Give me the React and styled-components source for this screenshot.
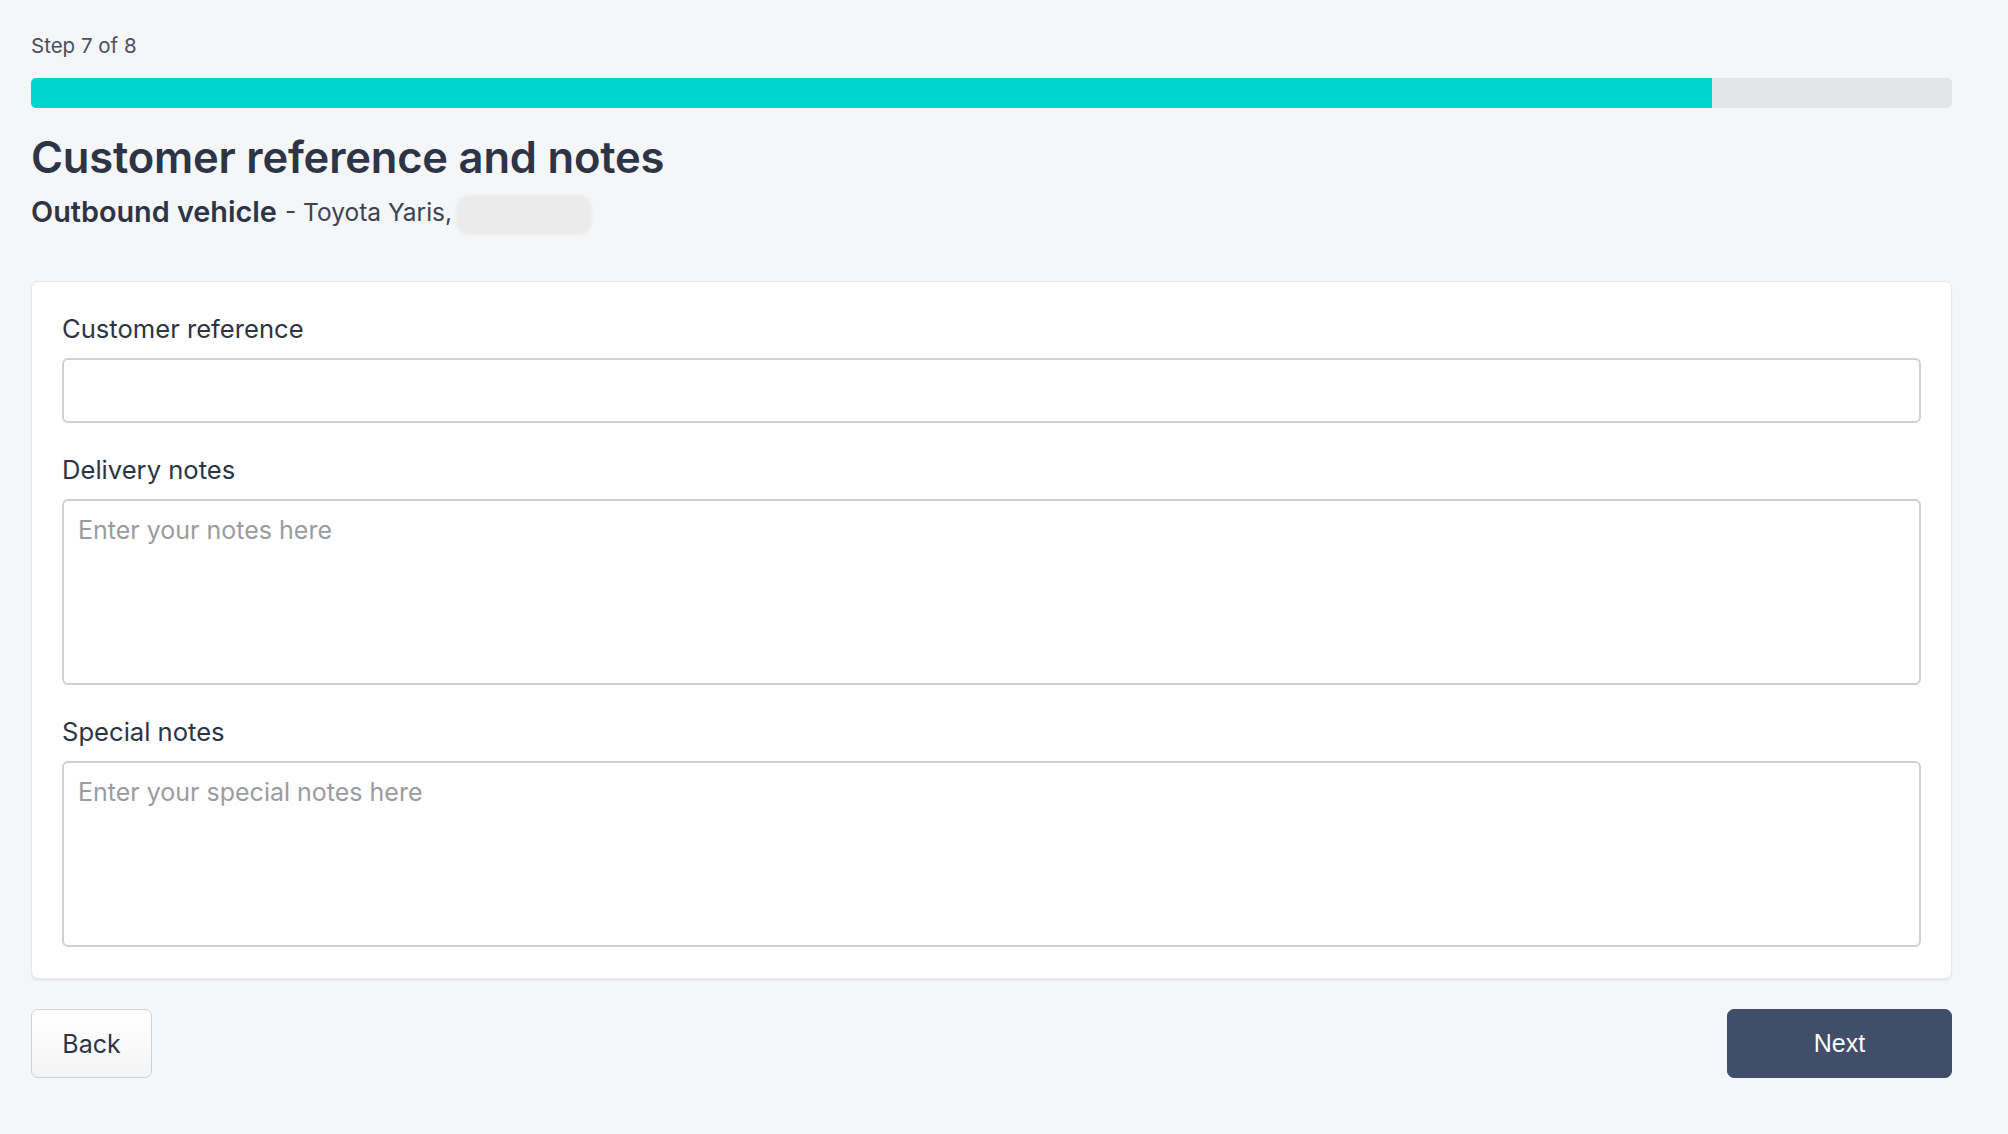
import React from "react";
import styled, { createGlobalStyle } from "styled-components";

const GlobalStyle = createGlobalStyle`
  html, body {
    margin: 0;
    padding: 0;
    background: #f5f6f8;
  }
  body {
    font-family: "Inter", "Lato", "Noto Sans", sans-serif;
    color: #2c3446;
  }
  * { box-sizing: border-box; }
`;

const Page = styled.div`
  min-height: 1133px;
  padding: 32px 56px 40px 31px;
  display: flex;
  flex-direction: column;
`;

const StepText = styled.div`
  font-size: 20.5px;
  line-height: 28px;
  color: #4b5060;
`;

const Track = styled.div`
  margin-top: 18px;
  height: 30px;
  border-radius: 5px;
  background: #e3e4e8;
  overflow: hidden;
`;

const Fill = styled.div`
  height: 100%;
  background: #00d6d0;
`;

const Title = styled.h1`
  margin: 24px 0 0;
  font-size: 43.5px;
  line-height: 50px;
  font-weight: 600;
  letter-spacing: -0.2px;
  color: #2c3446;
`;

const Subtitle = styled.div`
  margin-top: 7px;
  display: flex;
  align-items: center;
  font-size: 24.5px;
  line-height: 38px;
  color: #3d4352;
`;

const Strong = styled.span`
  font-size: 28.8px;
  font-weight: 600;
  color: #2c3446;
  margin-right: 8px;
`;

const Redacted = styled.span`
  display: inline-block;
  width: 136px;
  height: 40px;
  margin-left: 4px;
  margin-top: 6px;
  border-radius: 14px;
  background: #ebebeb;
  filter: blur(1px);
`;

const Card = styled.div`
  margin-top: 46px;
  background: #fff;
  border: 1px solid #e6e7ea;
  border-radius: 7px;
  box-shadow: 0 2px 2px rgba(0, 0, 0, 0.06);
  padding: 30px 30px 31px;
  display: flex;
  flex-direction: column;
`;

const Field = styled.div`
  display: flex;
  flex-direction: column;
  & + & {
    margin-top: 30px;
  }
`;

const Label = styled.label`
  font-size: 25.6px;
  line-height: 34px;
  color: #2c3446;
  margin-bottom: 12px;
`;

const TextInput = styled.input`
  height: 65px;
  border: 2px solid #cdd1d6;
  border-radius: 6px;
  padding: 0 14px;
  font: inherit;
  font-size: 25px;
  background: #fff;
  outline: none;
`;

const TextArea = styled.textarea`
  height: 186px;
  border: 2px solid #cdd1d6;
  border-radius: 6px;
  padding: 12px 14px;
  font-family: inherit;
  font-size: 25px;
  line-height: 34px;
  resize: none;
  background: #fff;
  outline: none;
  &::placeholder {
    color: #9b9ca1;
  }
`;

const Actions = styled.div`
  margin-top: 30px;
  display: flex;
  justify-content: space-between;
`;

const Button = styled.button`
  height: 69px;
  border-radius: 7px;
  font-size: 25px;
  cursor: pointer;
  width: ${(p) => (p.$primary ? "225px" : "121px")};
  border: 1px solid ${(p) => (p.$primary ? "#404e6a" : "#cfd1d4")};
  background: ${(p) =>
    p.$primary ? "#404e6a" : "linear-gradient(#ffffff, #f3f4f5)"};
  color: ${(p) => (p.$primary ? "#ffffff" : "#2c3446")};
  font-family: ${(p) =>
    p.$primary ? '"Liberation Sans", Arial, sans-serif' : "inherit"};
  font-weight: ${(p) => (p.$primary ? 500 : 400)};
`;

export default function App() {
  return (
    <>
      <GlobalStyle />
      <Page>
        <StepText>Step 7 of 8</StepText>
        <Track>
          <Fill style={{ width: `${(7 / 8) * 100}%` }} />
        </Track>
        <Title>Customer reference and notes</Title>
        <Subtitle>
          <Strong>Outbound vehicle</Strong>- Toyota Yaris,
          <Redacted />
        </Subtitle>
        <Card>
          <Field>
            <Label>Customer reference</Label>
            <TextInput type="text" />
          </Field>
          <Field>
            <Label>Delivery notes</Label>
            <TextArea placeholder="Enter your notes here" />
          </Field>
          <Field>
            <Label>Special notes</Label>
            <TextArea placeholder="Enter your special notes here" />
          </Field>
        </Card>
        <Actions>
          <Button>Back</Button>
          <Button $primary>Next</Button>
        </Actions>
      </Page>
    </>
  );
}
